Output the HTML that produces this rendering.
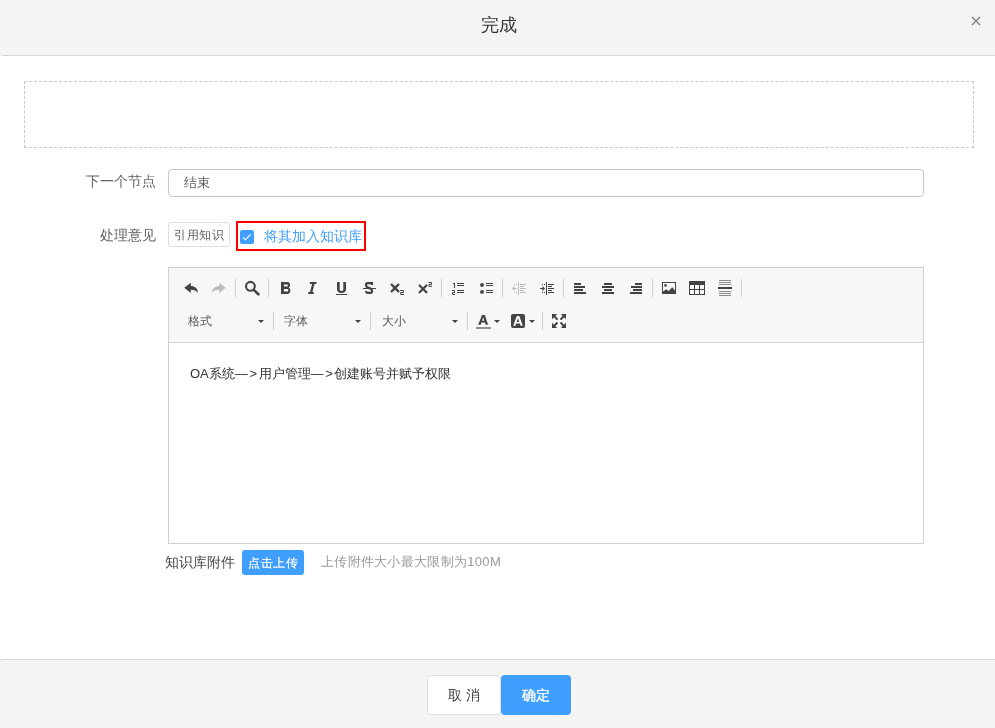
<!DOCTYPE html>
<html><head><meta charset="utf-8">
<style>
*{box-sizing:border-box;margin:0;padding:0}
html,body{width:995px;height:728px;overflow:hidden;-webkit-font-smoothing:antialiased;background:#fff;font-family:"Liberation Sans",sans-serif;color:#606266}
.a{position:absolute}
#hdr{left:0;top:0;width:995px;height:56px;background:#f4f4f4;border-bottom:1px solid #d4d6de;border-bottom-left-radius:3px}
#title{left:0;top:13px;width:998px;text-align:center;font-size:18px;line-height:24px;color:#333}
#dash{left:24px;top:81px;width:950px;height:67px;border:1px dashed #c6c8cc}
.lbl{font-size:14px;line-height:20px;color:#606266;text-align:right}
#inp{left:168px;top:169px;width:756px;height:28px;border:1px solid #c4c6d1;border-radius:4px}
#inptxt{left:184px;top:173px;font-size:13px;line-height:20px;color:#606266}
#cite{left:168px;top:222px;width:62px;height:25px;border:1px solid #dcdfe6;border-radius:3px;font-size:12px;letter-spacing:0.65px;text-indent:0.65px;line-height:25px;text-align:center;color:#606266}
#red{left:236px;top:221px;width:130px;height:30px;border:2px solid #f00}
#chk{left:240px;top:230px;width:14px;height:14px;background:#409eff;border-radius:2px}
#chktxt{left:264px;top:226px;font-size:14px;line-height:20px;color:#409eff}
#ed{left:168px;top:267px;width:756px;height:277px;border:1px solid #cfcfcf}
#tb{left:169px;top:268px;width:754px;height:75px;background:#f7f7f7;border-bottom:1px solid #cfcfcf}
#content{left:190px;top:364px;font-size:13px;line-height:20px;color:#333}
#attlbl{left:165px;top:552px;font-size:14px;line-height:20px;color:#474747}
#upl{left:242px;top:550px;width:62px;height:25px;background:#409eff;border-radius:3px;font-size:12px;letter-spacing:0.65px;text-indent:0.65px;line-height:27px;text-align:center;color:#fff;-webkit-text-stroke:0.2px #fff}
#hint{left:321px;top:552px;letter-spacing:0.3px;font-size:13px;line-height:20px;color:#999}
#ftr{left:0;top:659px;width:995px;height:69px;background:#f4f4f4;border-top:1px solid #d4d6de;border-top-left-radius:3px}
#cancel{left:427px;top:675px;width:74px;height:40px;background:#fff;border:1px solid #dcdfe6;border-radius:4px;font-size:14px;line-height:38px;text-align:center;color:#3d3d3d}
#ok{left:501px;top:675px;width:70px;height:40px;background:#409eff;border-radius:4px;font-size:14px;line-height:40px;text-align:center;color:#fff;-webkit-text-stroke:0.3px #fff}
.ar{letter-spacing:1.6px}
.sep{position:absolute;width:1px;background:#d0d0d0}
.ico{position:absolute}
.dd{position:absolute;font-size:12px;line-height:16px;color:#595959}
</style></head><body><div style="position:absolute;left:0;top:0;width:995px;height:728px;will-change:transform">
<div id="hdr" class="a"></div>
<div id="title" class="a">完成</div>
<svg class="a" style="left:970px;top:15px" width="12" height="12" viewBox="0 0 12 12"><path d="M2 2L10 10M10 2L2 10" stroke="#777" stroke-width="1.1"/></svg>
<div id="dash" class="a"></div>

<div class="a lbl" style="left:56px;top:171px;width:100px">下一个节点</div>
<div id="inp" class="a"></div>
<div id="inptxt" class="a">结束</div>

<div class="a lbl" style="left:56px;top:225px;width:100px">处理意见</div>
<div id="cite" class="a">引用知识</div>
<div id="red" class="a"></div>
<div id="chk" class="a"><svg width="14" height="14" viewBox="0 0 14 14"><path d="M3.1 7.3L5.5 9.7L10.8 4.2" stroke="#fff" stroke-width="1.1" fill="none"/></svg></div>
<div id="chktxt" class="a">将其加入知识库</div>

<div id="ed" class="a"></div>
<div id="tb" class="a"></div>
<svg class="a" style="left:0;top:0" width="995" height="728" viewBox="0 0 995 728">
<g fill="#434343">
<!-- undo -->
<path d="M184.3 287.8L190.8 282.8V285.9C194.6 285.9 197.9 288.3 198 293C196.4 290.6 194 289.7 190.8 289.7V292.9Z"/>
<!-- redo -->
<path fill="#bdbdbd" d="M225.7 287.8L219.2 282.8V285.9C215.4 285.9 212.1 288.3 212 293C213.6 290.6 216 289.7 219.2 289.7V292.9Z"/>
<!-- search -->
<circle cx="250.4" cy="286.3" r="4.4" fill="none" stroke="#434343" stroke-width="2.1"/>
<path d="M253.8 289.9L258.4 294.3" stroke="#434343" stroke-width="2.6" stroke-linecap="round"/>
<!-- bold -->
<path fill-rule="evenodd" d="M281 282H287.2C289.2 282 290.1 283.3 290.1 284.8C290.1 286.2 289.4 287.2 288.4 287.6C289.7 288 290.4 289.3 290.4 290.8C290.4 292.6 289.3 294 287.1 294H281ZM283.9 284.4V286.5H286.8C287.6 286.5 287.9 286.1 287.9 285.45C287.9 284.8 287.6 284.4 286.8 284.4ZM283.9 288.9V291.4H287.1C287.9 291.4 288.3 290.9 288.3 290.15C288.3 289.4 287.9 288.9 287.1 288.9Z"/>
<!-- italic -->
<path d="M310.2 282H316.7L316.2 284H314.5L312.4 292H314L313.5 294H308L308.5 292H310L312.1 284H309.7Z"/>
<!-- underline -->
<path d="M337 282H339.7V289.2C339.7 290.4 340.5 291 341.5 291C342.5 291 343.3 290.4 343.3 289.2V282H346V289.3C346 291.6 344.3 293 341.5 293C338.7 293 337 291.6 337 289.3Z"/>
<rect x="336" y="294" width="11" height="1"/>
<!-- strike -->
<path d="M372 284.9V283.1H367.6Q366.1 283.1 366.1 284.6V285.6Q366.1 286.9 367.5 287.4L370.6 288.6Q372 289.1 372 290.6V291.3Q372 292.8 370.5 292.8H367.5Q366.1 292.8 366.1 291.1" fill="none" stroke="#434343" stroke-width="2.2"/>
<rect x="363" y="288" width="13" height="1"/>
<!-- subscript -->
<path d="M391.6 284.6L398.4 291.4M398.4 284.6L391.6 291.4" stroke="#434343" stroke-width="2.2" stroke-linecap="round"/>
<path d="M400.2 290.5H403.5V292.5H400.7V294.5H404" fill="none" stroke="#434343" stroke-width="1"/>
<!-- superscript -->
<path d="M419.6 285.5L426.4 292.3M426.4 285.5L419.6 292.3" stroke="#434343" stroke-width="2.2" stroke-linecap="round"/>
<path d="M428.4 282.5H431.5V284.5H428.9V286.4H432" fill="none" stroke="#434343" stroke-width="1"/>
<!-- ordered list -->
<path d="M453 283.5H454.5V288" fill="none" stroke="#434343" stroke-width="1.1"/>
<path d="M452 290.5H454.5V292.5H452.5V294.5H455" fill="none" stroke="#434343" stroke-width="1"/>
<rect x="457" y="283" width="7" height="1"/><rect x="457" y="285" width="7" height="1"/>
<rect x="457" y="290" width="7" height="1"/><rect x="457" y="292" width="7" height="1"/>
<!-- unordered list -->
<circle cx="482" cy="285" r="1.9"/><circle cx="482" cy="291.9" r="1.9"/>
<rect x="486" y="283" width="7" height="1"/><rect x="486" y="285" width="7" height="1"/>
<rect x="486" y="290" width="7" height="1"/><rect x="486" y="292" width="7" height="1"/>
<!-- outdent -->
<g fill="#bbb">
<rect x="518" y="282" width="1" height="13"/>
<rect x="520" y="284" width="6" height="1"/><rect x="520" y="286" width="4" height="1"/><rect x="520" y="288" width="6" height="1"/><rect x="520" y="290" width="4" height="1"/><rect x="520" y="292" width="6" height="1"/>
<rect x="514" y="284" width="1" height="1"/><rect x="516" y="284" width="1" height="1"/><rect x="514" y="292" width="1" height="1"/><rect x="516" y="292" width="1" height="1"/>
<rect x="513" y="288" width="4" height="1"/><path d="M512 288.5L514.5 286V291Z"/>
</g>
<!-- indent -->
<rect x="546" y="282" width="1" height="13"/>
<rect x="548" y="284" width="6" height="1"/><rect x="548" y="286" width="4" height="1"/><rect x="548" y="288" width="6" height="1"/><rect x="548" y="290" width="4" height="1"/><rect x="548" y="292" width="6" height="1"/>
<rect x="542" y="284" width="1" height="1"/><rect x="544" y="284" width="1" height="1"/><rect x="542" y="292" width="1" height="1"/><rect x="544" y="292" width="1" height="1"/>
<rect x="540" y="288" width="3" height="1"/><path d="M545 288.5L542.5 286V291Z"/>
<!-- align left -->
<rect x="574" y="283" width="7" height="2"/><rect x="574" y="286" width="11" height="2"/><rect x="574" y="289" width="9" height="2"/><rect x="574" y="292" width="12" height="2"/>
<!-- align center -->
<rect x="604" y="283" width="8" height="2"/><rect x="602" y="286" width="12" height="2"/><rect x="604" y="289" width="8" height="2"/><rect x="602" y="292" width="12" height="2"/>
<!-- align right -->
<rect x="635" y="283" width="7" height="2"/><rect x="631" y="286" width="11" height="2"/><rect x="633" y="289" width="9" height="2"/><rect x="630" y="292" width="12" height="2"/>
<!-- image -->
<rect x="662.5" y="282.5" width="13" height="11" fill="none" stroke="#434343" stroke-width="1"/>
<circle cx="665.5" cy="285.4" r="1.3"/>
<path d="M663 293V291.5L666.3 289.2L668.6 291L672.3 287.2L675 290.8V293Z"/>
<!-- table -->
<path fill-rule="evenodd" d="M689 281H705V295H689ZM690 285V289H694V285ZM695 285V289H699V285ZM700 285V289H704V285ZM690 290V294H694V290ZM695 290V294H699V290ZM700 290V294H704V290Z"/>
<!-- hr -->
<g fill="#8c8c8c"><rect x="719" y="280" width="12" height="1"/><rect x="719" y="282" width="12" height="1"/><rect x="719" y="284" width="12" height="1"/><rect x="719" y="291" width="12" height="1"/><rect x="719" y="293" width="12" height="1"/><rect x="719" y="295" width="12" height="1"/></g>
<rect x="718" y="287" width="14" height="2"/>
<!-- carets -->
<path d="M258 320H264L261 323Z"/><path d="M355 320H361L358 323Z"/><path d="M452 320H458L455 323Z"/>
<path d="M494 320H500L497 323Z"/><path d="M529 320H535L532 323Z"/>
<!-- forecolor A -->
<path d="M478.2 324.7L482 315H484.9L488 324.7H485.6L484.9 322.5H481.5L480.7 324.7ZM482.1 320.7H484.3L483.2 317.3Z"/>
<rect x="476" y="327" width="15" height="2" fill="#909090"/>
<!-- backcolor -->
<rect x="511" y="314" width="14" height="14" rx="2"/>
<path fill="#fff" d="M513.2 325.8L516.8 316.1H519.3L522.8 325.8H520.6L519.9 323.6H516.1L515.4 325.8ZM516.7 321.9H519.3L518 318.3Z"/>
<!-- fullscreen -->
<path d="M552 314H557.2L552 319.2Z"/><path d="M566 314H560.8L566 319.2Z"/><path d="M552 328H557.2L552 322.8Z"/><path d="M566 328H560.8L566 322.8Z"/>
<path d="M554 316L557 319M564 316L561 319M554 326L557 323M564 326L561 323" stroke="#434343" stroke-width="1.9" stroke-linecap="round"/>
</g>
<g fill="#cdcdcd">
<rect x="235" y="279" width="1" height="18"/><rect x="268" y="279" width="1" height="18"/><rect x="441" y="279" width="1" height="18"/><rect x="502" y="279" width="1" height="18"/><rect x="563" y="279" width="1" height="18"/><rect x="652" y="279" width="1" height="18"/><rect x="741" y="279" width="1" height="18"/>
<rect x="273" y="312" width="1" height="18"/><rect x="370" y="312" width="1" height="18"/><rect x="467" y="312" width="1" height="18"/><rect x="542" y="312" width="1" height="18"/>
</g>
</svg>
<div class="a dd" style="left:188px;top:313px">格式</div>
<div class="a dd" style="left:284px;top:313px">字体</div>
<div class="a dd" style="left:382px;top:313px">大小</div>
<div id="content" class="a">OA系统<span class="ar">—&gt;</span>用户管理<span class="ar">—&gt;</span>创建账号并赋予权限</div>

<div id="attlbl" class="a">知识库附件</div>
<div id="upl" class="a">点击上传</div>
<div id="hint" class="a">上传附件大小最大限制为100M</div>

<div id="ftr" class="a"></div>
<div id="cancel" class="a">取 消</div>
<div id="ok" class="a">确定</div>
</div></body></html>
